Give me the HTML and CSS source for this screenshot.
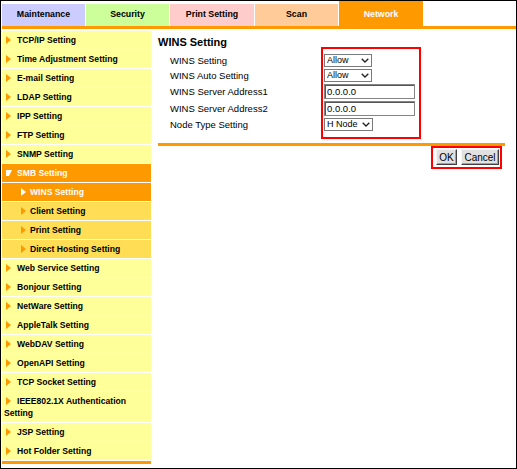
FILE: index.html
```html
<!DOCTYPE html>
<html lang="en">

<head>
    <meta charset="UTF-8">
    <title>Network - SMB - WINS Setting</title>
    <link rel="stylesheet" href="styles.css">
</head>

<body>
    <div class="frame">
        <div class="tabs">
            <div class="tab maint">Maintenance</div>
            <div class="tab security">Security</div>
            <div class="tab print">Print Setting</div>
            <div class="tab scan">Scan</div>
            <div class="tab network">Network</div>
        </div>

        <div class="main">
            <ul class="menu">
                <li><span class="arrow"></span>TCP/IP Setting</li>
                <li><span class="arrow"></span>Time Adjustment Setting</li>
                <li><span class="arrow"></span>E-mail Setting</li>
                <li><span class="arrow"></span>LDAP Setting</li>
                <li><span class="arrow"></span>IPP Setting</li>
                <li><span class="arrow"></span>FTP Setting</li>
                <li><span class="arrow"></span>SNMP Setting</li>
                <li class="on"><span class="arrow down"></span>SMB Setting</li>
                <li class="sub on"><span class="arrow"></span>WINS Setting</li>
                <li class="sub"><span class="arrow"></span>Client Setting</li>
                <li class="sub"><span class="arrow"></span>Print Setting</li>
                <li class="sub"><span class="arrow"></span>Direct Hosting Setting</li>
                <li><span class="arrow"></span>Web Service Setting</li>
                <li><span class="arrow"></span>Bonjour Setting</li>
                <li><span class="arrow"></span>NetWare Setting</li>
                <li><span class="arrow"></span>AppleTalk Setting</li>
                <li><span class="arrow"></span>WebDAV Setting</li>
                <li><span class="arrow"></span>OpenAPI Setting</li>
                <li><span class="arrow"></span>TCP Socket Setting</li>
                <li><span class="arrow"></span>IEEE802.1X Authentication Setting</li>
                <li><span class="arrow"></span>JSP Setting</li>
                <li><span class="arrow"></span>Hot Folder Setting</li>
            </ul>

            <div class="content">
                <h2>WINS Setting</h2>

                <div class="form">
                    <div class="labels">
                        <div class="row">WINS Setting</div>
                        <div class="row">WINS Auto Setting</div>
                        <div class="row tall">WINS Server Address1</div>
                        <div class="row tall">WINS Server Address2</div>
                        <div class="row">Node Type Setting</div>
                    </div>
                    <div class="box">
                        <div class="row">
                            <span class="sel">
                                <select><option>Allow</option><option>Restrict</option></select>
                                <svg viewBox="0 0 8 5"><path d="M0.7 0.7 L4 4 L7.3 0.7" /></svg>
                            </span>
                        </div>
                        <div class="row">
                            <span class="sel">
                                <select><option>Allow</option><option>Restrict</option></select>
                                <svg viewBox="0 0 8 5"><path d="M0.7 0.7 L4 4 L7.3 0.7" /></svg>
                            </span>
                        </div>
                        <div class="row tall"><input type="text" value="0.0.0.0"></div>
                        <div class="row tall"><input type="text" value="0.0.0.0"></div>
                        <div class="row">
                            <span class="sel node">
                                <select><option>H Node</option><option>B Node</option><option>P Node</option><option>M Node</option></select>
                                <svg viewBox="0 0 8 5"><path d="M0.7 0.7 L4 4 L7.3 0.7" /></svg>
                            </span>
                        </div>
                    </div>
                </div>

                <div class="rule"></div>

                <div class="actions">
                    <div class="btnbox">
                        <button class="ok">OK</button>
                        <button class="cancel">Cancel</button>
                    </div>
                </div>
            </div>
        </div>
    </div>
</body>

</html>
```

FILE: styles.css
```css
body {
    margin: 0;
    font-family: "Liberation Sans", Arial, sans-serif;
    background: #fff;
}

.frame {
    width: 517px;
    height: 469px;
    box-sizing: border-box;
    border: 1px solid #000;
    padding-left: 1px;
    overflow: hidden;
}

/* top tabs */
.tabs {
    display: flex;
    gap: 1px;
    height: 25px;
    border-bottom: 3px solid #f90;
}

.tabs .tab {
    margin-top: 3px;
    height: 22px;
    line-height: 21px;
    text-align: center;
    font-size: 8.8px;
    font-weight: bold;
    color: #000;
}

.tabs .maint {
    width: 83px;
    background: #ccf;
}

.tabs .security {
    width: 83px;
    background: #cf9;
}

.tabs .print {
    width: 84px;
    background: #fcc;
}

.tabs .scan {
    width: 83px;
    background: #fc9;
}

.tabs .network {
    width: 84px;
    margin-top: 0;
    height: 25px;
    padding-top: 3px;
    box-sizing: border-box;
    background: #f90;
    color: #fff;
}

.main {
    display: flex;
    align-items: flex-start;
    padding-top: 2px;
}

/* left menu */
.menu {
    width: 149px;
    flex: none;
    list-style: none;
    margin: 0;
    padding: 0;
    font-size: 8.6px;
    font-weight: bold;
    border-bottom: 3px solid #f90;
}

.menu li {
    background: #ff9;
    padding: 3px 2px 3px 2px;
    line-height: 12px;
    border-bottom: 1px solid #fff;
}

.menu li.sub {
    background: #fd5;
    padding-left: 17px;
}

.menu li.on {
    background: #f90;
    color: #fff;
}

.menu .arrow {
    display: inline-block;
    width: 0;
    height: 0;
    margin: 0 6px 0 2px;
    border-left: 5px solid #f90;
    border-top: 4px solid transparent;
    border-bottom: 4px solid transparent;
    vertical-align: -1px;
}

.menu li.sub .arrow {
    margin-right: 4px;
}

.menu li.on .arrow {
    border-left-color: #fff;
}

.menu .arrow.down {
    border-left: 3px solid transparent;
    border-right: 3px solid transparent;
    border-top: 6px solid #fff;
    border-bottom: 0;
    margin: 0 5px 0 2px;
    vertical-align: 0.5px;
}

/* content */
.content {
    flex: 1;
    margin-left: 7px;
    padding: 6px 11px 0 0;
}

.content h2 {
    margin: 0;
    height: 10px;
    font-size: 11px;
    line-height: 10px;
    font-weight: bold;
}

.form {
    display: flex;
}

.labels {
    width: 163px;
    box-sizing: border-box;
    padding: 6px 0 0 12px;
    font-size: 9.5px;
}

.row {
    height: 15px;
    display: flex;
    align-items: center;
}

.row.tall {
    height: 17px;
}

.box {
    width: 100px;
    box-sizing: border-box;
    border: 2px solid #f00;
    padding: 4px 0 5px 1px;
}

.sel {
    position: relative;
    display: inline-block;
}

.sel select {
    appearance: none;
    -webkit-appearance: none;
    display: block;
    width: 48px;
    height: 13px;
    margin: 0;
    padding: 0 0 0 2px;
    border: 1px solid #7a7a7a;
    border-radius: 0;
    background: #fff;
    font-family: "Liberation Sans", Arial, sans-serif;
    font-size: 9px;
    line-height: 11px;
    color: #000;
}

.sel.node select {
    width: 49px;
}

.sel svg {
    position: absolute;
    right: 3px;
    top: 4px;
    width: 8px;
    height: 5px;
    pointer-events: none;
}

.sel svg path {
    fill: none;
    stroke: #222;
    stroke-width: 1.3;
}

.box input {
    width: 91px;
    height: 15px;
    box-sizing: border-box;
    margin: 0;
    padding: 0 2px;
    border: 1px solid #858585;
    box-shadow: inset 1px 1px 0 #555;
    font-family: "Liberation Sans", Arial, sans-serif;
    font-size: 9.5px;
    color: #000;
}

.rule {
    height: 3px;
    margin-top: 4px;
    background: #f90;
}

.actions {
    display: flex;
    justify-content: flex-end;
    padding-right: 3px;
}

.btnbox {
    display: flex;
    gap: 4px;
    border: 2px solid #f00;
    padding: 1px 1px 2px 3px;
}

.btnbox button {
    height: 16px;
    margin: 0;
    padding: 0;
    font-family: "Liberation Sans", Arial, sans-serif;
    font-size: 10px;
    color: #000;
    background: #e1e1e1;
    border: 1px solid;
    border-color: #f4f4f4 #404040 #404040 #f4f4f4;
    box-shadow: inset -1px -1px 0 #a0a0a0;
}

.btnbox .ok {
    width: 21px;
}

.btnbox .cancel {
    width: 38px;
}
```
